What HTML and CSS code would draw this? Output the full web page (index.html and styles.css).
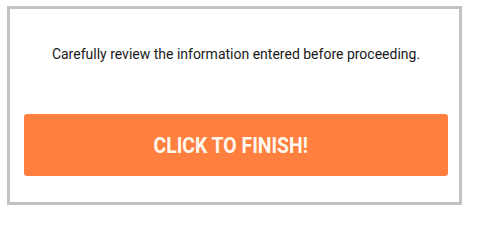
FILE: index.html
```html
<!DOCTYPE html>
<html>
<head>
<meta charset="utf-8">
<link rel="stylesheet" href="styles.css">
</head>
<body>
<div class="frame">
  <p class="note">Carefully review the information entered before proceeding.</p>
  <button class="finish"><span class="label">CLICK TO FINISH!</span></button>
</div>
</body>
</html>
```
FILE: styles.css
```css
html, body {
  margin: 0;
  padding: 0;
  background: #ffffff;
}
body {
  font-family: Roboto, "Liberation Sans", sans-serif;
}
.frame {
  box-sizing: border-box;
  margin: 6px 0 0 7px;
  width: 455px;
  height: 199px;
  border: 3px solid #c3c3c3;
  padding: 35px 11px 0 14px;
  display: flex;
  flex-direction: column;
  align-items: stretch;
}
.note {
  margin: 0;
  font-size: 14px;
  line-height: 20px;
  color: #1a1a1a;
  text-align: center;
}
.finish {
  margin-top: 50px;
  height: 62px;
  border: none;
  border-radius: 3px;
  background: #ff7f3f;
  color: #fff8ee;
  font-family: Roboto, "Liberation Sans", sans-serif;
  font-weight: 700;
  font-size: 22px;
  padding: 0 11px 0 0;
  display: flex;
  align-items: center;
  justify-content: center;
}
.label {
  display: inline-block;
  transform: scaleX(0.88);
  letter-spacing: 0;
}
```
